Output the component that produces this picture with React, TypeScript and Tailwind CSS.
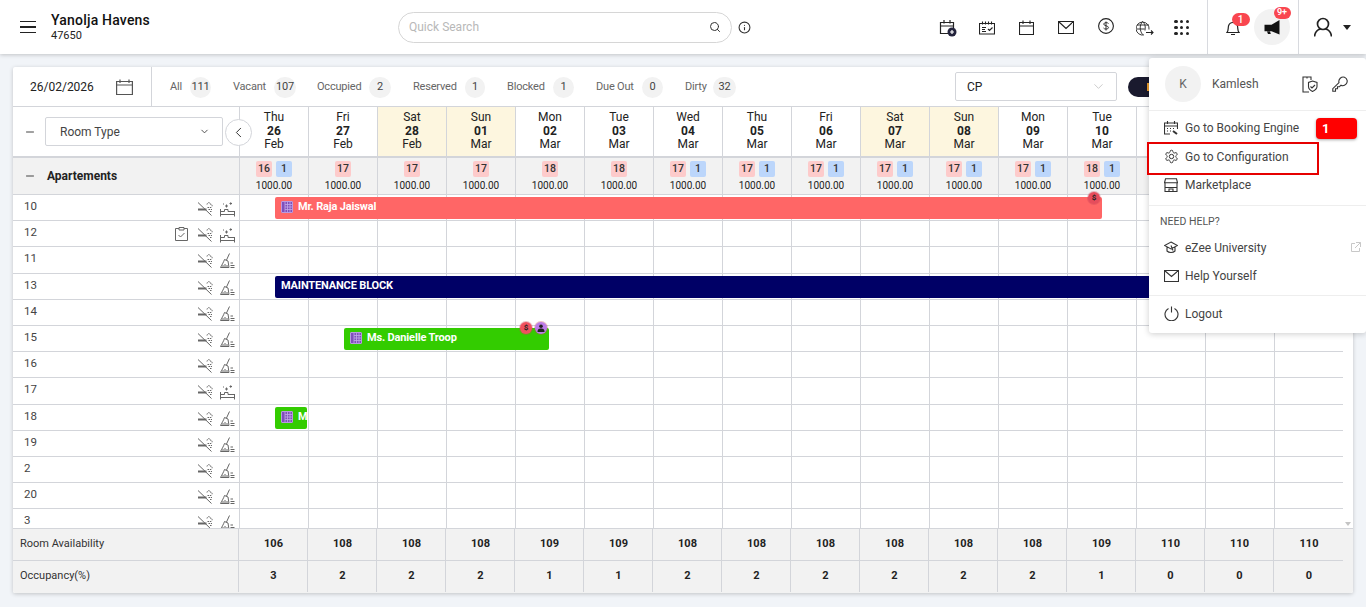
import { ChevronDown, ChevronLeft, Info, Minus, Search } from "lucide-react";

const days = [
  ["Thu", "26", "Feb"], ["Fri", "27", "Feb"], ["Sat", "28", "Feb"], ["Sun", "01", "Mar"],
  ["Mon", "02", "Mar"], ["Tue", "03", "Mar"], ["Wed", "04", "Mar"], ["Thu", "05", "Mar"],
  ["Fri", "06", "Mar"], ["Sat", "07", "Mar"], ["Sun", "08", "Mar"], ["Mon", "09", "Mar"],
  ["Tue", "10", "Mar"], ["Wed", "11", "Mar"], ["Thu", "12", "Mar"], ["Fri", "13", "Mar"],
];
const sold = [16, 17, 17, 17, 18, 18, 17, 17, 17, 17, 17, 17, 18, 18, 18, 18];
const blocked = [1, 0, 0, 0, 0, 0, 1, 1, 1, 1, 1, 1, 1, 0, 0, 0];
const avail = [106, 108, 108, 108, 109, 109, 108, 108, 108, 108, 108, 108, 109, 110, 110, 110];
const occ = [3, 2, 2, 2, 1, 1, 2, 2, 2, 2, 2, 2, 1, 0, 0, 0];
const rooms = [
  { no: "10", bed: true }, { no: "12", bed: true, task: true }, { no: "11" }, { no: "13" },
  { no: "14" }, { no: "15" }, { no: "16" }, { no: "17", bed: true }, { no: "18" },
  { no: "19" }, { no: "2" }, { no: "20" }, { no: "3" },
];
const filters = [
  ["All", "111", "ml-[18px]", "w-[13px]", "w-[21px] text-[#7a4b2a]"],
  ["Vacant", "107", "ml-[22px]", "w-[34px]", "w-[22px]"],
  ["Occupied", "2", "ml-[21px]", "w-[45px]", "w-[22px]"],
  ["Reserved", "1", "ml-[22px]", "w-[45px]", "w-[20px]"],
  ["Blocked", "1", "ml-[22px]", "w-[39px]", "w-[21px]"],
  ["Due Out", "0", "ml-[22px]", "w-[39px]", "w-[21px]"],
  ["Dirty", "32", "ml-[22px]", "w-[21px]", "w-[23px]"],
];

function Smoke() {
  return (
    <svg width="16" height="16" viewBox="0 0 16 16" fill="none" stroke="#666" strokeWidth="1">
      <path d="M1 1.5l13.5 13" />
      <path d="M1 8.5h8.5" strokeWidth="2" />
      <path d="M10 3.5c.5-2.5 3-2.5 3-.5c1.5 0 2.5 1 2 2.5M10.5 6.5h4.5M11.5 8.5h3.5M13 10.500h2" strokeDasharray="1.5 .8" />
    </svg>
  );
}

function Bed() {
  return (
    <svg width="15" height="16" viewBox="0 0 15 16" fill="none" stroke="#666" strokeWidth="1">
      <path d="M.5 8v7.5M.5 13.5h14M14.5 10v5.500M.5 10.500h4v-2h3.500v2h6.500" />
      <path d="M5 5h3M6.500 3.500v3M9.500 2.500h2.500M10.700 1.300v2.500M3 3h1" />
    </svg>
  );
}

function Broom() {
  return (
    <svg width="15" height="16" viewBox="0 0 15 16" fill="none" stroke="#666" strokeWidth="1">
      <path d="M9.500 .5l-3 6.500M4.500 6.500l3.500 1.500l1 6.500h-8.500c1-2 3-5 4-8z" />
      <path d="M3 14v-2M5 14v-3M7 14v-2M10.500 10h2.500M10.500 12.500h4M10.500 14.500h4" />
    </svg>
  );
}

function Clipboard() {
  return (
    <svg width="13" height="14" viewBox="0 0 13 14" fill="none" stroke="#666" strokeWidth="1" className="mr-[2px]">
      <path d="M4 1.500h-3.500v12h12v-12h-3.500M4 .5h5v2.500h-5zM3.500 8l2 2l4-4" />
    </svg>
  );
}

function BuildingTag() {
  return (
    <span className="flex h-3 w-3 shrink-0 items-center justify-center rounded-[1px] border border-[#b99ae0] bg-[#7f4fbb]">
      <svg width="10" height="10" viewBox="0 0 10 10" fill="none" stroke="#c3a9e8" strokeWidth=".8">
        <path d="M3 0v10M5.500 0v10M8 0v10M3 2.500h7M3 5h7M3 7.500h7" />
      </svg>
    </span>
  );
}

function Stay({ left, top, width, color, label, bold }: { left: number; top: number; width: number; color: string; label: string; bold?: boolean }) {
  return (
    <div
      className="absolute flex h-[22px] items-center gap-[5px] overflow-hidden rounded-[2px] px-[6px] pb-[2px] text-[11px] font-bold tracking-[-0.15px] whitespace-nowrap text-white"
      style={{ left, top, width, background: color }}
    >
      {!bold && <BuildingTag />}
      <span>{label}</span>
    </div>
  );
}

function Marker({ left, top, className, children }: { left: number; top: number; className: string; children: React.ReactNode }) {
  return (
    <span
      className={`absolute flex h-[12px] w-[12px] items-center justify-center rounded-full text-[8px] font-bold text-[#222] shadow-[0_0_0_1px_rgba(200,70,90,0.35)] ${className}`}
      style={{ left, top }}
    >
      {children}
    </span>
  );
}

function TopIcon({ children }: { children: React.ReactNode }) {
  return <div className="flex w-[39.5px] justify-center">{children}</div>;
}

function Header() {
  return (
    <header className="relative z-20 flex h-[54px] items-center bg-white shadow-[0_1px_4px_rgba(0,0,0,0.2)]">
      <div className="ml-5 flex w-4 flex-col gap-[4px]">
        <span className="h-[1.5px] bg-[#222]" />
        <span className="h-[1.5px] bg-[#222]" />
        <span className="h-[1.5px] bg-[#222]" />
      </div>
      <div className="ml-[15px] w-[347px]">
        <div className="text-[14px] leading-[17px] font-medium tracking-[0.2px] text-[#111]">Yanolja Havens</div>
        <div className="text-[11px] leading-[13px] text-[#222]">47650</div>
      </div>
      <div className="flex h-[31px] w-[334px] items-center rounded-full border border-[#d6d6d6] px-[10px]">
        <span className="flex-1 text-[12px] text-[#b8b8b8]">Quick Search</span>
        <Search size={12} color="#333" strokeWidth={2} />
      </div>
      <Info size={13} color="#333" className="ml-[6px]" />
      <div className="ml-[177px] flex items-center pt-[1px]">
        <TopIcon>
          <svg width="18" height="18" viewBox="0 0 18 18" fill="none" stroke="#222" strokeWidth="1.2">
            <path d="M9 14.500h-7.500v-11h13v6M1.500 7h13M5 1v3.500M11 1v3.500" />
            <circle cx="13" cy="13" r="4.500" fill="#23233c" stroke="none" />
            <path d="M11 13h4M13 11v4" stroke="#fff" />
          </svg>
        </TopIcon>
        <TopIcon>
          <svg width="16" height="14" viewBox="0 0 16 14" fill="none" stroke="#222" strokeWidth="1.1">
            <path d="M.5 2.500h15v10.500h-15zM3.500 .5v3M6.500 .5v3M9.500 .5v3M12.500 .5v3M3 6.500h4M3 8.500h3M3 10.500h4M9 8l1.500 1.500l3-3" />
          </svg>
        </TopIcon>
        <TopIcon>
          <svg width="15" height="15" viewBox="0 0 15 15" fill="none" stroke="#222" strokeWidth="1.1">
            <path d="M.5 2.500h14v12h-14zM.5 6h14M4 .5v3.500M11 .5v3.500" />
          </svg>
        </TopIcon>
        <TopIcon>
          <svg width="16" height="13" viewBox="0 0 16 13" fill="none" stroke="#222" strokeWidth="1.1">
            <path d="M.5 .5h15v12h-15zM.5 .5l7.500 7l7.500-7" />
          </svg>
        </TopIcon>
        <TopIcon>
          <svg width="16" height="16" viewBox="0 0 16 16" fill="none" stroke="#222" strokeWidth="1.1" className="mb-[3px]">
            <circle cx="8" cy="8" r="7.400" />
            <path d="M10.500 5.500c-.5-1-4.500-1.500-4.800 .5c-.2 2.200 5 1.300 4.800 3.800c-.2 1.800-4.500 1.500-5 .2M8 3.500v9" strokeWidth=".9" />
          </svg>
        </TopIcon>
        <TopIcon>
          <svg width="18" height="16" viewBox="0 0 18 16" fill="none" stroke="#222" strokeWidth=".9">
            <path d="M13 9.500a6.500 6.500 0 1 0-5 5.400M1 5h12M.8 9h8M6.500 1.500c-3 3.500-3 9 0 13M6.500 1.500c3 2.500 3 6 2.500 9" />
            <path d="M10 12.500h7M15 10.500l2 2l-2 2" strokeWidth="1.1" />
          </svg>
        </TopIcon>
        <div className="ml-[9px] grid w-[15px] grid-cols-3 gap-[2.5px]">
          {Array.from({ length: 9 }).map((_, i) => (
            <span key={i} className="h-[3.5px] w-[3.5px] rounded-full bg-[#222]" />
          ))}
        </div>
      </div>
      <div className="ml-[17.5px] flex h-full items-center border-x border-[#d8dadf]">
        <div className="relative ml-[17px] flex w-[16px] justify-center pt-[2px]">
          <svg width="14" height="16" viewBox="0 0 14 16" fill="none" stroke="#222" strokeWidth="1.2">
            <path d="M1 12.500c1.500-1.500 1-4 1.500-6.500c.5-2 2.500-3.500 4.500-3.500s4 1.500 4.500 3.500c.5 2.500 0 5 1.500 6.500zM5 14.500h4" />
          </svg>
          <span className="absolute top-[-5px] left-[7px] flex h-[13px] w-[18px] items-center justify-center rounded-full bg-[#f9464f] text-[10px] font-medium text-white">1</span>
        </div>
        <div className="relative mr-[8px] ml-[13px] flex h-9 w-9 items-center justify-center rounded-full bg-[#f2f2f2]">
          <svg width="16" height="15" viewBox="0 0 16 15" fill="#111">
            <path d="M15.500 0v14.500l-8-3.200h-7v-6.500h7zM3 11.500h3l.8 2.500h-2.800z" />
          </svg>
          <span className="absolute top-[-2px] left-[20px] flex h-[12px] w-[17px] items-center justify-center rounded-full bg-[#f9464f] text-[9px] font-semibold text-white">9+</span>
        </div>
      </div>
      <svg width="18" height="20" viewBox="1 0 18 20" fill="none" stroke="#222" strokeWidth="1.7" className="ml-[15px]">
        <circle cx="10" cy="7" r="5.500" />
        <path d="M1.500 19.500c.5-5 4-7 6-7.500M18.500 19.500c-.5-5-4-7-6-7.500" />
      </svg>
      <span className="ml-[11px] h-0 w-0 border-x-[4px] border-t-[5px] border-x-transparent border-t-[#222]" />
    </header>
  );
}

function Toolbar() {
  return (
    <div className="flex h-[40px] items-center border-b border-[#d3d5da]">
      <div className="flex h-full w-[139px] items-center border-r border-[#d3d5da] pl-[17px]">
        <span className="w-[63px] text-[12px] whitespace-nowrap text-[#222]">26/02/2026</span>
        <svg width="17" height="16" viewBox="0 0 17 16" fill="none" stroke="#555" strokeWidth="1.2" className="ml-[23px]">
          <path d="M.6 2.500h15.800v13h-15.800zM.6 6h15.800M4 .5v3.500M13 .5v3.500" />
        </svg>
      </div>
      <div className="flex w-[803px] items-center pt-[1px] text-[11px] tracking-[-0.2px] text-[#666]">
        {filters.map(([name, count, gap, labelWidth, chip]) => (
          <div key={name} className={`flex items-center gap-[7px] ${gap}`}>
            <span className={`whitespace-nowrap ${labelWidth}`}>{name}</span>
            <span className={`flex h-[21px] items-center justify-center rounded-full bg-[#f2f2f2] text-[#444] ${chip}`}>{count}</span>
          </div>
        ))}
      </div>
      <div className="flex h-[29px] w-[162px] items-center justify-between rounded-[2px] border border-[#d3d5da] pr-[10px] pl-[11px] text-[12px] text-[#222]">
        CP
        <ChevronDown size={15} color="#bbb" strokeWidth={1.2} />
      </div>
      <div className="ml-[11px] flex h-[20px] w-[60px] items-center rounded-full bg-[#1a1a2e] pl-[19px]">
        <span className="h-[8px] w-[2px] bg-[#e79a2c]" />
      </div>
    </div>
  );
}

function DateHeader() {
  return (
    <div className="flex h-[51px] border-b-[2px] border-[#d3d5da]">
      <div className="relative flex w-[227px] items-center border-r border-[#d3d5da] pl-[11px]">
        <Minus size={12} color="#444" />
        <div className="ml-[9px] flex h-[29px] w-[178px] items-center justify-between rounded-[2px] border border-[#d3d5da] px-[14px] pr-[12px] text-[12px] text-[#444]">
          Room Type
          <ChevronDown size={11} color="#444" />
        </div>
        <div className="absolute top-[12px] left-[212px] z-10 flex h-[27px] w-[27px] items-center justify-center rounded-full border border-[#d3d5da] bg-white">
          <ChevronLeft size={17} color="#333" strokeWidth={1.4} />
        </div>
      </div>
      {days.map((d, i) => {
        const weekend = d[0] === "Sat" || d[0] === "Sun";
        return (
          <div
            key={i}
            className={`flex w-[69px] flex-col items-center border-r border-[#d3d5da] pt-[4px] text-[12px] leading-[13.5px] text-[#222] ${weekend ? "bg-[#fdf6df]" : "bg-white"}`}
          >
            <span>{d[0]}</span>
            <span className="font-bold">{d[1]}</span>
            <span>{d[2]}</span>
          </div>
        );
      })}
    </div>
  );
}

function ApartmentRow() {
  return (
    <div className="flex h-[37px] border-b border-[#d3d5da] bg-[#f2f2f2]">
      <div className="flex w-[227px] items-center border-r border-[#d3d5da] pl-[11px] text-[12px] font-bold text-[#222]">
        <Minus size={12} color="#444" />
        <span className="ml-[11px]">Apartements</span>
      </div>
      {days.map((_, i) => (
        <div key={i} className="flex w-[69px] flex-col items-center border-r border-[#d3d5da] pt-[3px]">
          <div className="flex h-4 gap-1 text-[10.5px] font-medium text-[#333]">
            <span className="flex h-4 w-4 items-center justify-center rounded-[2px] bg-[#fdcbcb]">{sold[i]}</span>
            {blocked[i] > 0 && <span className="flex h-4 w-4 items-center justify-center rounded-[2px] bg-[#bcd6fb]">{blocked[i]}</span>}
          </div>
          <span className="mt-[3px] text-[10px] leading-[12px] text-[#222]">1000.00</span>
        </div>
      ))}
    </div>
  );
}

function RoomGrid() {
  return (
    <div className="relative h-[333px] [clip-path:inset(-10px_0_0_0)]">
      {rooms.map((r, i) => (
        <div key={i} className={`flex border-b border-[#d3d5da] ${i === 2 || i === 7 ? "h-[27px]" : "h-[26px]"}`}>
          <div className="flex w-[227px] border-r border-[#d3d5da] pr-[4px] pl-[11px]">
            <span className="flex-1 pt-[4px] text-[11.5px] leading-[14px] text-[#444]">{r.no}</span>
            <div className="flex items-start gap-[7px] pt-[6px]">
              {r.task && <Clipboard />}
              <Smoke />
              {r.bed ? <Bed /> : <Broom />}
            </div>
          </div>
          {days.map((_, d) => (
            <div key={d} className="w-[69px] border-r border-[#d3d5da]" />
          ))}
        </div>
      ))}
      <Stay left={262} top={2} width={827} color="#ff6666" label="Mr. Raja Jaiswal" />
      <Marker left={1075} top={-3} className="bg-[#e64d5c]">$</Marker>
      <Stay left={262} top={81} width={1000} color="#000066" label="MAINTENANCE BLOCK" bold />
      <Stay left={331} top={133} width={205} color="#33cc00" label="Ms. Danielle Troop" />
      <Marker left={507} top={127} className="bg-[#f0505f]">$</Marker>
      <Marker left={522} top={127} className="bg-[#bb7be8]">
        <svg width="8" height="8" viewBox="0 0 8 8" fill="#222">
          <circle cx="4" cy="2.2" r="1.8" />
          <path d="M.5 8c0-3 1.500-3.500 3.500-3.500s3.500 .5 3.500 3.500z" />
        </svg>
      </Marker>
      <Stay left={262} top={212} width={32} color="#33cc00" label="M" />
    </div>
  );
}

function FooterRow({ label, values, last }: { label: string; values: number[]; last?: boolean }) {
  return (
    <div className={`flex h-[32px] bg-[#f2f2f2] pb-[1px] ${last ? "" : "[background-image:linear-gradient(#d3d5da,#d3d5da)] bg-[length:1330px_1px] bg-[position:0_100%] bg-no-repeat"}`}>
      <div className="flex w-[226px] items-center border-r border-[#d3d5da] pl-[7px] text-[11px] text-[#333]">{label}</div>
      {values.map((v, i) => (
        <div
          key={i}
          className={`flex w-[69px] items-center justify-center pl-[1px] text-[11px] font-bold text-[#222] ${i === values.length - 1 ? "" : "border-r border-[#d3d5da]"}`}
        >
          {v}
        </div>
      ))}
    </div>
  );
}

function MenuItem({ icon, label, outline }: { icon: React.ReactNode; label: string; outline?: boolean }) {
  return (
    <div className="relative flex h-[28.5px] items-center pl-[15px] text-[12px] text-[#444]">
      <span className="flex w-[21px] justify-start">{icon}</span>
      {label}
      {outline && <span className="absolute top-[-1px] left-[-2px] h-[33px] w-[172px] border-2 border-[#e60000]" />}
    </div>
  );
}

function ProfileMenu() {
  return (
    <aside className="absolute top-[58px] right-0 z-30 w-[217px] rounded-[3px] bg-white shadow-[0_1px_6px_rgba(0,0,0,0.2)]">
      <div className="flex h-[53px] items-center border-b border-[#eeeeee] pr-[18px] pl-[16px]">
        <span className="flex h-9 w-9 items-center justify-center rounded-full bg-[#f2f2f2] text-[12px] text-[#666]">K</span>
        <span className="ml-[11px] flex-1 text-[12px] text-[#555]">Kamlesh</span>
        <svg width="16" height="17" viewBox="0 0 16 17" fill="none" stroke="#333" strokeWidth="1.1">
          <path d="M7 16h-6v-15h8v3M5 .5v2" />
          <path d="M10.500 5l4.500 1.500v4c0 2-2 3.800-4.500 5c-2.500-1.200-4-3-4-5v-4zM8.500 10.500l1.500 1.500l3-3" />
        </svg>
        <svg width="16" height="16" viewBox="0 0 16 16" fill="none" stroke="#333" strokeWidth="1.1" className="ml-[14px]">
          <path d="M.8 15.200v-2.500l6.200-6c-1-3.500 2.500-6.500 5.500-5.500c3 1.200 3.500 5 1.500 7c-1.500 1.500-3.500 1.800-5 1l-1.500 1.500h-2v2h-2v2.500z" />
        </svg>
      </div>
      <div className="border-b border-[#eeeeee] pt-[3px] pb-[5px]">
        <MenuItem
          label="Go to Booking Engine"
          icon={
            <svg width="14" height="14" viewBox="0 0 14 14" fill="none" stroke="#333" strokeWidth="1.1">
              <path d="M6 13h-5.500v-11h13v6M.5 5h13M3.500 0v3M10.500 0v3M3 7.500h1M6 7.500h1M9 7.500h1M3 10h1M6 10h1" />
              <path d="M9 10l4 3" strokeWidth="2" />
            </svg>
          }
        />
        <MenuItem
          label="Go to Configuration"
          outline
          icon={
            <svg width="15" height="15" viewBox="0 0 24 24" fill="none" stroke="#333" strokeWidth="1.6">
              <path d="M12.220 2h-.44a2 2 0 0 0-2 2v.18a2 2 0 0 1-1 1.730l-.43.250a2 2 0 0 1-2 0l-.150-.08a2 2 0 0 0-2.730.730l-.220.380a2 2 0 0 0 .730 2.730l.150.100a2 2 0 0 1 1 1.720v.510a2 2 0 0 1-1 1.740l-.150.090a2 2 0 0 0-.730 2.730l.220.380a2 2 0 0 0 2.730.730l.150-.08a2 2 0 0 1 2 0l.430.250a2 2 0 0 1 1 1.730V20a2 2 0 0 0 2 2h.440a2 2 0 0 0 2-2v-.18a2 2 0 0 1 1-1.730l.430-.250a2 2 0 0 1 2 0l.150.080a2 2 0 0 0 2.730-.730l.220-.390a2 2 0 0 0-.730-2.730l-.150-.080a2 2 0 0 1-1-1.740v-.500a2 2 0 0 1 1-1.740l.150-.090a2 2 0 0 0 .730-2.730l-.220-.380a2 2 0 0 0-2.730-.730l-.150.080a2 2 0 0 1-2 0l-.430-.250a2 2 0 0 1-1-1.730V4a2 2 0 0 0-2-2z" />
              <circle cx="12" cy="12" r="3.500" />
            </svg>
          }
        />
        <MenuItem
          label="Marketplace"
          icon={
            <svg width="14" height="14" viewBox="0 0 14 14" fill="none" stroke="#333" strokeWidth="1.1">
              <path d="M1.500 .8h11l1 4h-13zM1 5v8.500h12v-8.500M1 9.500h12M5 13.500v-2.500h4v2.500" />
            </svg>
          }
        />
      </div>
      <div className="border-b border-[#eeeeee] pb-[5px]">
        <div className="pt-[8px] pb-[4px] pl-[11px] text-[10.5px] text-[#555]">NEED HELP?</div>
        <div className="relative">
          <MenuItem
            label="eZee University"
            icon={
              <svg width="14" height="13" viewBox="0 0 14 13" fill="none" stroke="#333" strokeWidth="1.1">
                <path d="M7 1l6.500 3.500l-6.500 3.500l-6.500-3.500zM3 6v4c2 2 6 2 8 0v-4M7 4.500l2 5" />
              </svg>
            }
          />
          <svg width="10" height="10" viewBox="0 0 10 10" fill="none" stroke="#c8c8c8" strokeWidth="1" className="absolute top-[9px] right-[5px]">
            <path d="M4 1.500h-3.500v8h8v-3.500M5 .5h4.500v4.500M9.500 .5l-5.500 5.500" />
          </svg>
        </div>
        <MenuItem
          label="Help Yourself"
          icon={
            <svg width="15" height="12" viewBox="0 0 15 12" fill="none" stroke="#333" strokeWidth="1.1">
              <path d="M.5 .5h14v11h-14zM.5 .5l7 6l7-6" />
            </svg>
          }
        />
      </div>
      <div className="pt-[3px] pb-[5px]">
        <MenuItem
          label="Logout"
          icon={
            <svg width="15" height="15" viewBox="0 0 15 15" fill="none" stroke="#333" strokeWidth="1.1">
              <path d="M4.500 2.500a6.500 6.500 0 1 0 6 0M7.500 .5v6" />
            </svg>
          }
        />
      </div>
      <span className="absolute top-[60px] left-[167px] flex h-[21px] w-[41px] items-center rounded-[4px] bg-[#ff0000] pl-[6px] text-[13px] font-bold text-white shadow-[0_1px_3px_rgba(0,0,0,0.35)]">1</span>
    </aside>
  );
}

export default function App() {
  return (
    <div className="relative h-[607px] w-[1366px] overflow-hidden bg-[#f1f4f8] font-['Roboto',sans-serif]">
      <Header />
      <main className="mt-[13px] ml-[13px] w-[1340px] overflow-hidden rounded-[2px] bg-white shadow-[0_1px_4px_rgba(0,0,0,0.2)]">
        <Toolbar />
        <div className="relative">
          <DateHeader />
          <ApartmentRow />
          <RoomGrid />
          <div className="absolute top-[88px] right-0 bottom-0 flex w-[10px] flex-col items-center justify-end bg-white pb-[2px]">
            <span className="h-0 w-0 border-x-[3px] border-t-[4px] border-x-transparent border-t-[#c4c4c4]" />
          </div>
        </div>
        <div className="border-t border-[#d3d5da]">
          <FooterRow label="Room Availability" values={avail} />
          <FooterRow label="Occupancy(%)" values={occ} last />
        </div>
      </main>
      <ProfileMenu />
    </div>
  );
}
